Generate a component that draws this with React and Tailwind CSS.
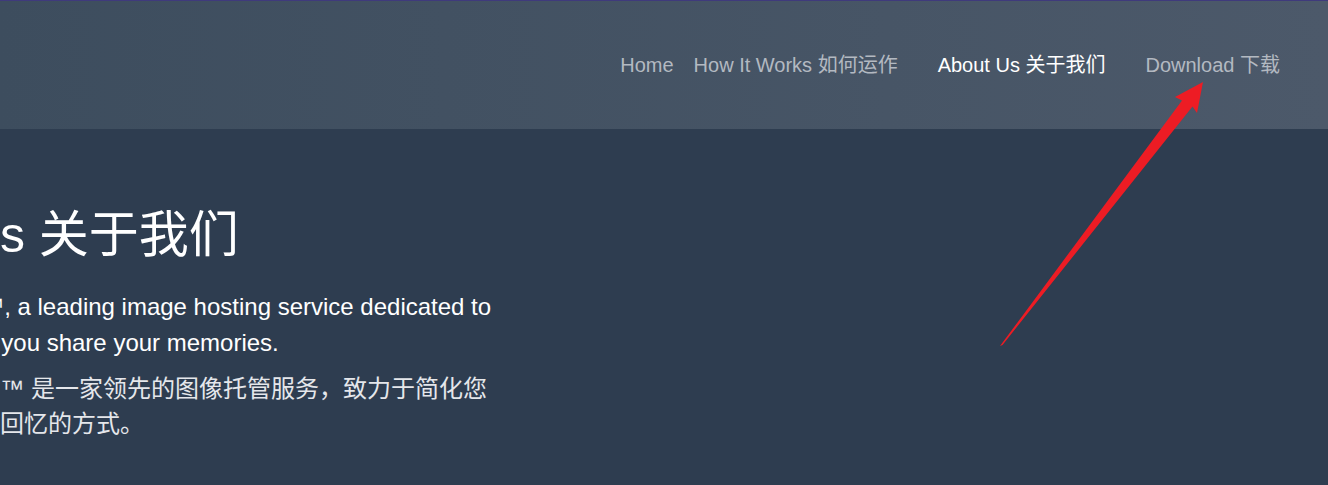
export default function App() {
  return (
    <div className="relative flex h-screen w-full flex-col overflow-hidden bg-[#2e3d50] font-['Liberation_Sans','Noto_Sans_CJK_SC',sans-serif]">
      <header className="flex h-[129px] shrink-0 items-center justify-end border-t border-[#3f3a7c] bg-linear-to-r from-[#3d4d5e] to-[#4c596a] pr-[48px]">
        <nav>
          <ul className="flex items-baseline text-[20px] whitespace-nowrap">
            <li className="text-[#b3b9c1]">Home</li>
            <li className="ml-5 text-[#b3b9c1]">How It Works 如何运作</li>
            <li className="ml-10 text-white">About Us 关于我们</li>
            <li className="ml-10 text-[#b3b9c1]">Download 下载</li>
          </ul>
        </nav>
      </header>
      <main className="flex-1 overflow-hidden pt-[77px]">
        <div className="ml-[-424px] w-[920px] text-center">
          <h1 className="pr-[14px] text-[50px] font-normal leading-[58px] text-white">About Us 关于我们</h1>
          <p className="mt-[25px] text-[24px] leading-[36px] text-white">
            Welcome to PixelVault Image Hosting™, a leading image hosting service dedicated to simplifying the way you share your memories.
          </p>
          <p className="mt-[10px] text-[24px] leading-[35px] text-[#e5e7eb]">
            欢迎来到PixelVault 图像站。PixelVault ™ 是一家领先的图像托管服务，致力于简化您分享与回忆的方式。
          </p>
        </div>
      </main>
      <svg
        className="pointer-events-none absolute left-0 top-0"
        width="1328"
        height="485"
        viewBox="0 0 1328 485"
      >
        <polygon
          points="1203,82 1175,97 1182,100.5 1000,346 1002.5,345 1192.5,106.5 1197,113"
          fill="#ed1c24"
        />
      </svg>
    </div>
  );
}
